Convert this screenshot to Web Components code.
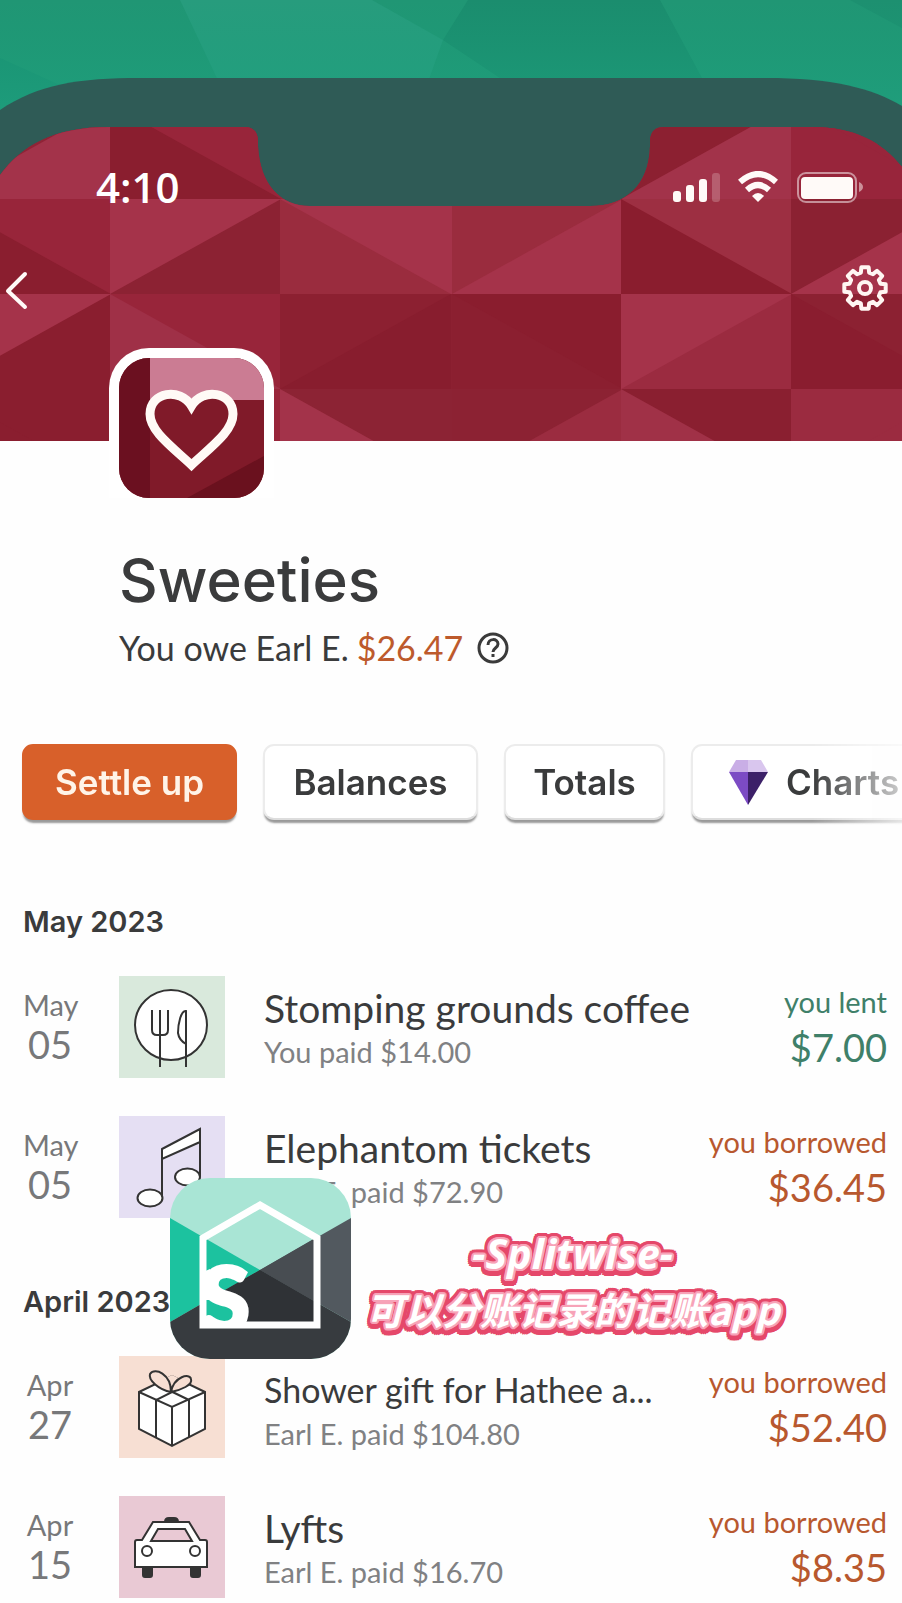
<!DOCTYPE html>
<html lang="en">
<head>
<meta charset="utf-8">
<meta name="viewport" content="width=device-width, initial-scale=1">
<title>Sweeties</title>
<style>
  body { margin: 0; background: #fefefe; color: #3a3b3c; font-family: Lato, "Liberation Sans", sans-serif; }
</style>
</head>
<body>
<group-page>
  <phone-header></phone-header>
  <group-summary name="Sweeties" person="Earl E." amount="$26.47"></group-summary>
  <action-bar>
    <action-button primary style="--w:215px">Settle up</action-button>
    <action-button style="--w:215px">Balances</action-button>
    <action-button style="--w:161px">Totals</action-button>
    <action-button gem style="--w:240px">Charts</action-button>
  </action-bar>
  <expense-month label="May 2023">
    <expense-row month="May" day="05" icon="food" kind="lent" amount="$7.00" note="You paid $14.00">Stomping grounds coffee</expense-row>
    <expense-row month="May" day="05" icon="music" kind="borrowed" amount="$36.45" note="Earl E. paid $72.90">Elephantom tickets</expense-row>
  </expense-month>
  <expense-month label="April 2023">
    <expense-row compact month="Apr" day="27" icon="gift" kind="borrowed" amount="$52.40" note="Earl E. paid $104.80">Shower gift for Hathee a...</expense-row>
    <expense-row month="Apr" day="15" icon="car" kind="borrowed" amount="$8.35" note="Earl E. paid $16.70">Lyfts</expense-row>
  </expense-month>
  <promo-badge slot="overlay"><span slot="title">-Splitwise-</span><span slot="text">可以分账记录的记账app</span></promo-badge>
</group-page>

<script>
const define = (name, render) => customElements.define(name, class extends HTMLElement {
  connectedCallback() {
    if (this.shadowRoot) return;
    this.attachShadow({ mode: 'open' }).innerHTML = render(this);
  }
});

define('group-page', () => `
  <style>
    :host { display: block; position: relative; overflow: hidden; padding-bottom: 4px; }
  </style>
  <main><slot></slot></main>
  <slot name="overlay"></slot>`);

/* Facets of the cover: one square cell each, split along a diagonal.
   [x, y, direction, colour above, colour below] */
const facets = [
  [-60,104,'u','#8f2436','#a3334a'], [110,104,'d','#98253a','#8a1e2f'], [621,104,'u','#8c2031','#a2334a'], [791,104,'d','#98253b','#98253b'],
  [-60,199,'d','#98253a','#8a1e2f'], [110,199,'u','#a5334a','#8c2233'], [280,199,'d','#a5334a','#9a2c3e'],
  [452,199,'u','#9a2c3e','#a5334a'], [621,199,'d','#9d2f42','#8a1d2e'], [791,199,'u','#8b2132','#a5334a'],
  [-60,294,'u','#a5334a','#8a1e2f'], [110,294,'d','#98253a','#9f3047'], [280,294,'u','#8c2031','#881d2e'],
  [452,294,'d','#8a1d2e','#8b1f30'], [621,294,'u','#a5334a','#9b2b40'], [791,294,'d','#8c2132','#8a1d2f'],
  [-60,389,'d','#8a1e2f','#8a1e2f'], [110,389,'u','#98253a','#98253a'], [280,389,'d','#8c2334','#a3334a'],
  [452,389,'u','#8c2233','#9b2c40'], [621,389,'d','#8a1f30','#a03147'], [791,389,'u','#9b2b40','#9b2b40']
].map(([x, y, dir, a, b]) => `<rect x="${x}" y="${y}" width="172" height="96" fill="${a}"/>` +
  `<polygon fill="${b}" points="${dir === 'd' ? `${x},${y} ${x + 171},${y + 95} ${x},${y + 95}` : `${x},${y + 95} ${x + 171},${y} ${x + 171},${y + 95}`}"/>`).join('');

const teeth = 8;
const gearPath = (() => {
  const pts = [];
  const at = (r, deg) => { const t = deg * Math.PI / 180; return `${(24 + r * Math.sin(t)).toFixed(2)} ${(24 - r * Math.cos(t)).toFixed(2)}`; };
  for (let i = 0; i < teeth; i++) {
    const c = i * 45;
    pts.push(at(16, c - 15), at(21, c - 10), at(21, c + 10), at(16, c + 15));
  }
  return 'M' + pts.join('L') + 'Z';
})();

define('phone-header', () => `
  <style>
    :host { display: block; position: relative; height: 441px; overflow: hidden; color: #fff; }
    .cover { position: absolute; inset: 0; width: 100%; height: 100%; }
    .bars { position: relative; }
    .status { display: flex; justify-content: space-between; align-items: center; height: 40px; padding: 167px 39px 0 96px; }
    time { font: 600 42px/40px "Open Sans", "Noto Sans", sans-serif; }
    nav { display: flex; justify-content: space-between; align-items: center; height: 48px; padding: 57px 13px 0 0; }
    button { display: block; margin: 0; padding: 0; border: 0; background: none; color: inherit; height: 48px; }
    svg { display: block; }
  </style>
  <svg class="cover" viewBox="0 0 902 441" preserveAspectRatio="xMidYMin slice" aria-hidden="true">
    <defs>
      <clipPath id="screen"><path d="M0 175C22 146 52 127 110 127H245Q257 127 258 140V146C260 184 280 206 310 206H590C627 206 649 184 650 146V140Q651 127 664 127H812C855 127 882 142 902 167V441H0Z"/></clipPath>
      <linearGradient id="glow" x2="0" y2="1"><stop stop-color="#17a07a" stop-opacity="0"/><stop offset="1" stop-color="#1fa381" stop-opacity=".6"/></linearGradient>
    </defs>
    <rect width="902" height="441" fill="#209674"/>
    <path fill="#279c7d" d="M180 0H372L443 40L418 110H232Z"/>
    <path fill="#1b8d6e" d="M468 0H660L702 78H500L443 40Z"/>
    <path fill="#1d9070" d="M850 0H902V28Z"/>
    <path fill="#1b9172" d="M0 58L75 92L0 120Z"/>
    <rect width="902" height="112" fill="url(#glow)"/>
    <path fill="#2f5b56" d="M0 110C38 84 80 78 140 78H765C832 78 872 88 902 106V441H0Z"/>
    <g clip-path="url(#screen)"><rect width="902" height="441" fill="#98253a"/>${facets}</g>
  </svg>
  <div class="bars">
    <div class="status">
      <time datetime="04:10">4:10</time>
      <svg width="190" height="32" viewBox="0 0 190 32" role="img" aria-label="Signal, Wi-Fi and battery">
        <g fill="#fffaf8">
          <rect y="20" width="8" height="11" rx="3"/><rect x="13" y="14" width="8" height="17" rx="3"/>
          <rect x="26" y="8" width="8" height="23" rx="3"/><rect x="39" y="2" width="8" height="29" rx="3" opacity=".22"/>
          <rect x="128" y="6" width="52" height="22" rx="4"/>
          <path opacity=".5" d="M186 11Q190 13 190 16Q190 19 186 21Z"/>
          <path d="M85 31L79 25Q85 19 91 25Z"/>
        </g>
        <rect x="125" y="2" width="58" height="29" rx="8" fill="none" stroke="#fff" stroke-width="2" opacity=".5"/>
        <g fill="none" stroke="#fffaf8" stroke-width="6"><path d="M67 11Q85 -5 103 11"/><path d="M74 19Q85 9 96 19"/></g>
      </svg>
    </div>
    <nav>
      <button type="button" aria-label="Back"><svg width="32" height="48" viewBox="0 0 32 48"><path d="M25 10L8 27L25 43" fill="none" stroke="#fffaf8" stroke-width="4" stroke-linecap="round" stroke-linejoin="round"/></svg></button>
      <button type="button" aria-label="Group settings"><svg width="48" height="48" viewBox="0 0 48 48" fill="none" stroke="#fff6f2" stroke-width="4" stroke-linejoin="round"><path d="${gearPath}"/><circle cx="24" cy="24" r="6"/></svg></button>
    </nav>
  </div>`);

define('group-summary', el => `
  <style>
    :host { display: block; position: relative; margin-top: -93px; padding: 0 15px 0 109px; }
    .avatar { box-sizing: border-box; width: 165px; height: 150px; padding: 10px 10px 0; border-radius: 40px 40px 0 0; background: #fff; }
    .avatar svg { display: block; border-radius: 30px; }
    .text { padding-left: 10px; }
    h1 { margin: 47px 0 11px; font: 500 60px/70px Inter, sans-serif; }
    p { display: flex; align-items: center; margin: 0; font-size: 34px; line-height: 44px; }
    .owed { margin-left: 8px; color: #bd5a2c; }
    button { display: block; margin: 0 0 0 14px; padding: 0; border: 0; background: none; color: inherit; }
    button svg { display: block; }
  </style>
  <div class="avatar">
    <svg width="145" height="140" viewBox="0 0 145 140" aria-hidden="true">
      <rect width="145" height="140" fill="#801a29"/><rect width="31" height="140" fill="#6b1020"/>
      <rect x="31" width="114" height="42" fill="#cb7c93"/><path fill="#6a111e" d="M68 140L145 98V140Z"/>
      <path fill="#801a29" stroke="#fffaf6" stroke-width="9" d="M72.500 107C52 88 31 73 31 56C31 34 61 29 72.500 48C84 29 114 34 114 56C114 73 93 88 72.500 107Z"/>
    </svg>
  </div>
  <div class="text">
    <h1>${el.getAttribute('name')}</h1>
    <p><span>You owe ${el.getAttribute('person')}</span><span class="owed">${el.getAttribute('amount')}</span>
      <button type="button" aria-label="Explain balance"><svg width="32" height="32" viewBox="0 0 32 32" fill="none" stroke="#3a3a3a" stroke-width="3"><circle cx="16" cy="16" r="14"/><path d="M11 13C11 6 21 6 21 12C21 16 16 16 16 20"/><path d="M16 22V25"/></svg></button></p>
  </div>`);

define('action-bar', () => `
  <style>
    :host { display: flex; gap: 26px; margin-top: 74px; padding: 0 0 8px 22px; overflow: hidden;
      -webkit-mask-image: linear-gradient(to right, #000 calc(100% - 90px), rgba(0,0,0,.25)); mask-image: linear-gradient(to right, #000 calc(100% - 90px), rgba(0,0,0,.25)); }
  </style>
  <slot></slot>`);

define('action-button', el => `
  <style>
    :host { display: block; flex: none; width: var(--w); }
    button { display: flex; align-items: center; justify-content: center; gap: 18px; box-sizing: border-box; width: 100%; height: 76px; margin: 0; padding: 0;
      border: 2px solid #ececec; border-bottom-color: #ddd; border-radius: 11px; background: #fff; color: #3a3b3c;
      box-shadow: 0 4px 2px -1px #999; font: 600 35px/40px Inter, sans-serif; white-space: nowrap; }
    :host([primary]) button { border-color: #d8602a; background: #d8602a; color: #fff4e8; }
    :host([gem]) button { justify-content: flex-start; padding-left: 36px; }
    svg { flex: none; }
  </style>
  <button type="button">${el.hasAttribute('gem') ? `<svg width="39" height="45" viewBox="0 0 39 45" aria-hidden="true">
    <path fill="#c9aee6" d="M7 0H19V12H0Z"/><path fill="#d9c6ee" d="M19 0H32L39 12H19Z"/><path fill="#7c4bc4" d="M0 12H19V45Z"/><path fill="#3c2068" d="M19 12H39L19 45Z"/></svg>` : ''}<slot></slot></button>`);

define('expense-month', el => `
  <style>
    :host { display: block; margin-top: 66px; }
    :host(:first-of-type) { margin-top: 76px; }
    h2 { margin: 0 0 37px; padding-left: 23px; font: 600 29px/35px Inter, sans-serif; }
    .rows { display: grid; gap: 38px; }
  </style>
  <h2>${el.getAttribute('label')}</h2>
  <div class="rows"><slot></slot></div>`);

const tiles = {
  food: ['#d9e9dc', `<ellipse cx="52" cy="49" rx="36" ry="35" fill="#fff"/><path fill="none" d="M33 34V54Q33 59 38 59H44Q49 59 49 54V34M41 34V91M67 91V35C62 34 59 48 59 57Q60 64 67 68"/>`],
  music: ['#e5dff3', `<path fill="#fff" d="M43 33L81 13V26L43 43Z"/><path fill="none" d="M43 33V82M81 13V61"/><ellipse cx="31" cy="82" rx="12.500" ry="8.500" fill="#fff"/><ellipse cx="68.500" cy="61" rx="12.500" ry="8.500" fill="#fff"/>`],
  gift: ['#f7dfd3', `<path fill="#fff" d="M20 36L53 20L86 36V73L53 90L20 73Z"/><path fill="none" d="M20 36L53 51L86 36M53 51V90M37 81V44L69 28M70 81V44L37 28"/><path fill="#f7dfd3" stroke="none" d="M36 27L53 19L70 27L53 35Z"/><path fill="#f7dfd3" d="M52 36C40 34 29 24 31 18C36 11 52 18 52 36C55 20 71 17 72 23C74 29 62 34 52 36Z"/>`],
  car: ['#e9c9d4', `<path fill="#333" d="M46 26Q46 22 50 22H55Q59 22 59 26Z"/><path fill="#333" d="M24 71H33V79Q33 81 31 81H26Q24 81 24 79ZM72 71H81V79Q81 81 79 81H74Q72 81 72 79Z"/><path fill="#fff" d="M16 46Q16 44 18 44H23L34 26H70L81 44H86Q88 44 88 46V71H16Z"/><path fill="#e9c9d4" d="M32 45L39 33H66L73 45Z"/><circle cx="28" cy="55" r="5" fill="#fff"/><circle cx="76" cy="55" r="5" fill="#fff"/>`]
};

define('expense-row', el => {
  const get = n => el.getAttribute(n);
  const [tint, art] = tiles[get('icon')];
  return `
  <style>
    :host { display: grid; grid-template-columns: 54px 106px minmax(0, 1fr) auto; align-items: start; padding: 0 15px 0 23px; height: 102px; white-space: nowrap; }
    .date { padding-top: 12px; text-align: center; color: #77787a; font-size: 29px; line-height: 34px; }
    .date b { display: block; font-weight: 400; font-size: 38px; line-height: 44px; }
    .tile { display: block; margin-left: 42px; }
    .what { padding: 8px 0 0 81px; }
    h3 { margin: 0; font-weight: 400; font-size: 39px; line-height: 48px; }
    :host([compact]) h3 span { font-size: 34px; }
    p { margin: 0; color: #808183; font-size: 29px; line-height: 40px; }
    .share { padding-top: 9px; text-align: right; font-size: 29px; line-height: 34px; color: #b8582e; }
    .share b { display: block; font-weight: 400; font-size: 38px; line-height: 56px; }
    :host([kind="lent"]) .share { color: #3f8069; }
  </style>
  <div class="date">${get('month')}<b>${get('day')}</b></div>
  <svg class="tile" width="106" height="102" viewBox="0 0 106 102" stroke="#333" stroke-width="2" aria-hidden="true"><rect width="106" height="102" fill="${tint}" stroke="none"/>${art}</svg>
  <div class="what"><h3><span><slot></slot></span></h3><p>${get('note')}</p></div>
  <div class="share">you ${get('kind')}<b>${get('amount')}</b></div>`;
});

/* Sticker outline: a pale ring close to the letters, a deeper one behind it. */
const ring = (radius, drop, colour) => Array.from({ length: 16 }, (_, i) => {
  const t = i * Math.PI / 8;
  return `${Math.round(radius * Math.cos(t))}px ${Math.round(radius * Math.sin(t)) + drop}px ${colour}`;
}).join(',');

define('promo-badge', () => `
  <style>
    :host { position: absolute; left: 170px; top: 1178px; display: flex; align-items: center; gap: 15px; }
    svg { display: block; flex: none; border-radius: 40px; }
    .caption { padding-top: 25px; text-align: center; color: #fff; font: italic 700 38px/56px "Noto Sans CJK SC", "Noto Sans", sans-serif; white-space: nowrap;
      text-shadow: ${ring(2, 0, '#f7a3b8')}, ${ring(5, 0, '#e5486a')}, ${ring(5, 2, '#e5486a')}; }
    .title { font-size: 41px; font-family: "Noto Sans", sans-serif; }
  </style>
  <svg width="181" height="181" viewBox="0 0 181 181" role="img" aria-label="Splitwise">
    <defs><clipPath id="house"><path d="M90 26L149 60V149H31V60Z"/></clipPath></defs>
    <rect width="181" height="181" fill="#a9e5d5"/>
    <path fill="#1cc29f" d="M0 40L90 92L0 144Z"/><path fill="#52595f" d="M181 40L90 92L181 144Z"/><path fill="#373b3f" d="M0 144L90 92L181 144V181H0Z"/>
    <path fill="#484d52" d="M147 59V125L90 92Z"/><path fill="#2f3236" d="M34 124L90 92L147 125V147H34Z"/>
    <path fill="#1cc29f" d="M34 122L66 120V147H34Z"/>
    <text clip-path="url(#house)" x="55" y="155" text-anchor="middle" font-family="Lato, sans-serif" font-weight="900" font-size="91" fill="#fff" stroke="#fff" stroke-width="3">S</text>
    <path fill="#fff" d="M33 94L40 91V122H33Z"/>
    <path fill="none" stroke="#fff" stroke-width="7" d="M90 27L147 60V147H33V60Z"/>
  </svg>
  <div class="caption"><div class="title"><slot name="title"></slot></div><slot name="text"></slot></div>`);
</script>
</body>
</html>
